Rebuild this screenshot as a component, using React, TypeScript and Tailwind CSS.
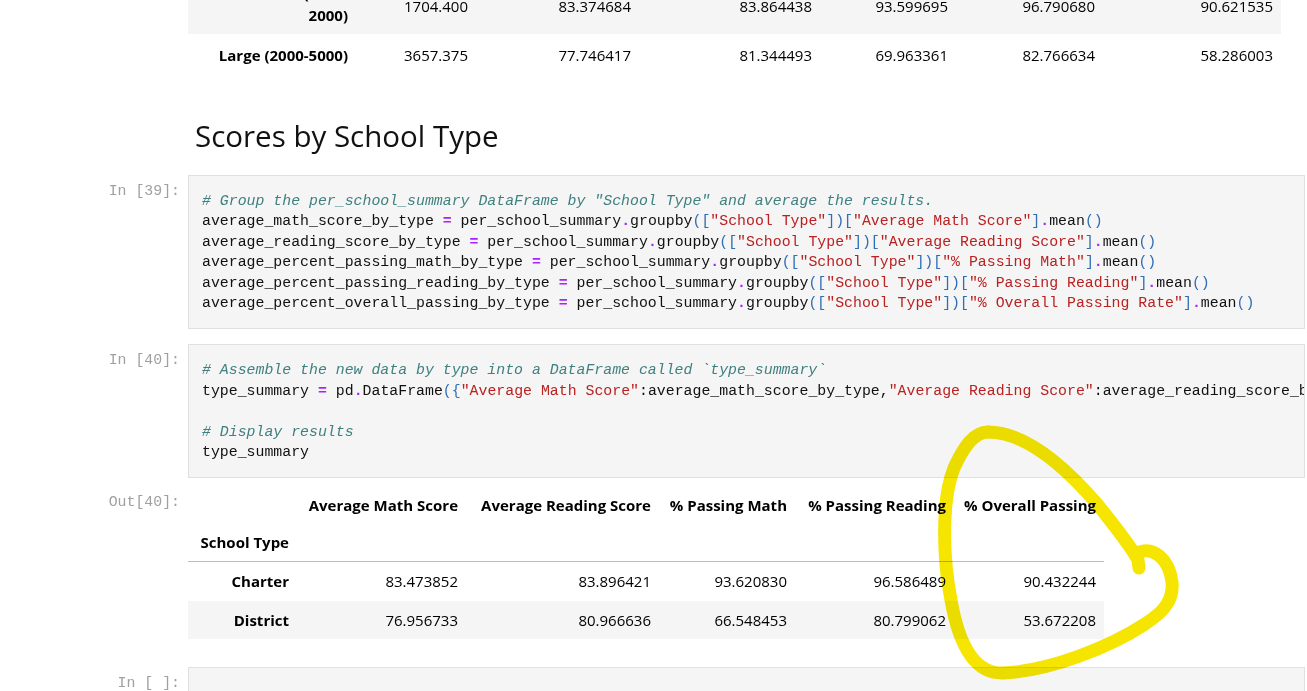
const MONO = "font-['Liberation_Mono',monospace] text-[14.87px] leading-[20.4px]"
const SANS = "font-['Open_Sans','Noto_Sans',sans-serif]"

const tokenRe = /(#.*$)|("[^"]*")|([=.])|([\[\](){}])|([^#"=.\[\](){}]+)/g

function CodeLine({ line }: { line: string }) {
  if (!line) return <div className="h-[20.4px]" />
  const parts: { text: string; cls: string }[] = []
  for (const m of line.matchAll(tokenRe)) {
    if (m[1]) parts.push({ text: m[1], cls: 'text-[#408080] italic' })
    else if (m[2]) parts.push({ text: m[2], cls: 'text-[#ba2121]' })
    else if (m[3]) parts.push({ text: m[3], cls: 'text-[#aa22ff] font-bold' })
    else if (m[4]) parts.push({ text: m[4], cls: 'text-[#2f6db5]' })
    else parts.push({ text: m[5], cls: 'text-[#111]' })
  }
  return (
    <div className="whitespace-pre">
      {parts.map((p, i) => (
        <span key={i} className={p.cls}>
          {p.text}
        </span>
      ))}
    </div>
  )
}

function InputCell({ prompt, lines, className = '' }: { prompt: string; lines: string[]; className?: string }) {
  return (
    <div className={`flex ${className}`}>
      <div className={`w-[188px] shrink-0 whitespace-pre pr-[8px] pt-[6px] text-right text-[#a0a0a0] ${MONO}`}>{prompt}</div>
      <div className={`w-[1117px] shrink-0 overflow-hidden border border-[#e0e0e0] bg-[#f5f5f5] px-[13px] py-[15px] ${MONO}`}>
        {lines.map((l, i) => (
          <CodeLine key={i} line={l} />
        ))}
      </div>
    </div>
  )
}

const cell39 = [
  '# Group the per_school_summary DataFrame by "School Type" and average the results.',
  'average_math_score_by_type = per_school_summary.groupby(["School Type"])["Average Math Score"].mean()',
  'average_reading_score_by_type = per_school_summary.groupby(["School Type"])["Average Reading Score"].mean()',
  'average_percent_passing_math_by_type = per_school_summary.groupby(["School Type"])["% Passing Math"].mean()',
  'average_percent_passing_reading_by_type = per_school_summary.groupby(["School Type"])["% Passing Reading"].mean()',
  'average_percent_overall_passing_by_type = per_school_summary.groupby(["School Type"])["% Overall Passing Rate"].mean()',
]

const cell40 = [
  '# Assemble the new data by type into a DataFrame called `type_summary`',
  'type_summary = pd.DataFrame({"Average Math Score":average_math_score_by_type,"Average Reading Score":average_reading_score_by_type})',
  '',
  '# Display results',
  'type_summary',
]

const outRows = [
  { name: 'Charter', vals: ['83.473852', '83.896421', '93.620830', '96.586489', '90.432244'], cls: 'h-[40px] bg-white' },
  { name: 'District', vals: ['76.956733', '80.966636', '66.548453', '80.799062', '53.672208'], cls: 'h-[38px] bg-[#f5f5f5]' },
]

export default function App() {
  return (
    <div className={`relative h-[691px] w-[1307px] overflow-hidden bg-white text-black ${SANS}`}>
      {/* tail of the size summary table */}
      <div className="pl-[188px]">
        <table className="-mt-[22px] w-[1093px] table-fixed text-[15px]">
          <colgroup>
            <col className="w-[168px]" />
            <col className="w-[120px]" />
            <col className="w-[163px]" />
            <col className="w-[181px]" />
            <col className="w-[136px]" />
            <col className="w-[147px]" />
            <col className="w-[178px]" />
          </colgroup>
          <tbody>
            <tr className="h-[56px] bg-[#f5f5f5]">
              <th className="px-[8px] pb-[4px] text-right align-middle font-bold leading-[22px]">
                (1000-
                <br />
                2000)
              </th>
              {['1704.400', '83.374684', '83.864438', '93.599695', '96.790680', '90.621535'].map((v) => (
                <td key={v} className="px-[8px] text-right align-middle">{v}</td>
              ))}
            </tr>
            <tr className="h-[42px]">
              <th className="px-[8px] text-right align-middle font-bold">Large (2000-5000)</th>
              {['3657.375', '77.746417', '81.344493', '69.963361', '82.766634', '58.286003'].map((v) => (
                <td key={v} className="px-[8px] text-right align-middle">{v}</td>
              ))}
            </tr>
          </tbody>
        </table>
      </div>

      <h2 className="mt-[43px] h-[34px] pl-[195px] text-[29.5px] font-medium leading-[34px] text-[#111]">Scores by School Type</h2>

      <InputCell prompt="In [39]:" lines={cell39} className="mt-[22px]" />
      <InputCell prompt="In [40]:" lines={cell40} className="mt-[15px]" />

      {/* output of cell 40 */}
      <div className="mt-[8px] flex">
        <div className={`w-[188px] shrink-0 pr-[8px] pt-[6px] text-right text-[#a0a0a0] ${MONO}`}>Out[40]:</div>
        <table className="w-[916px] table-fixed text-[15px]">
          <colgroup>
            <col className="w-[109px]" />
            <col className="w-[169px]" />
            <col className="w-[193px]" />
            <col className="w-[136px]" />
            <col className="w-[159px]" />
            <col className="w-[150px]" />
          </colgroup>
          <thead>
            <tr className="h-[38px]">
              <th className="px-[8px]" />
              {['Average Math Score', 'Average Reading Score', '% Passing Math', '% Passing Reading', '% Overall Passing'].map((h) => (
                <th key={h} className="whitespace-nowrap px-[8px] text-right align-middle font-bold">{h}</th>
              ))}
            </tr>
            <tr className="h-[37px] border-b border-[#bdbdbd]">
              <th className="whitespace-nowrap px-[8px] text-right align-middle font-bold">School Type</th>
              <th /><th /><th /><th /><th />
            </tr>
          </thead>
          <tbody>
            {outRows.map((r) => (
              <tr key={r.name} className={r.cls}>
                <th className="px-[8px] text-right align-middle font-bold">{r.name}</th>
                {r.vals.map((v) => (
                  <td key={v} className="px-[8px] text-right align-middle">{v}</td>
                ))}
              </tr>
            ))}
          </tbody>
        </table>
      </div>

      <div className="mt-[28px] flex">
        <div className={`w-[188px] shrink-0 whitespace-pre pr-[8px] pt-[6px] text-right text-[#a0a0a0] ${MONO}`}>In [ ]:</div>
        <div className="h-[60px] w-[1117px] shrink-0 border border-[#e0e0e0] bg-[#f5f5f5]" />
      </div>

      {/* hand-drawn highlighter loop */}
      <svg className="pointer-events-none absolute left-0 top-0 h-[691px] w-[1307px] mix-blend-multiply" viewBox="0 0 1307 691" fill="none">
        <path
          d="M988 432 C1028 432 1068 470 1098 505 C1116 528 1131 546 1138 560 L1139 568"
          stroke="#f5e500"
          strokeWidth="13"
          strokeLinecap="round"
          strokeLinejoin="round"
        />
        <path
          d="M1139 552 C1153 547 1169 558 1172 582 C1174 603 1160 614 1145 624 C1110 647 1050 671 1003 673 C973 674 958 640 951 600 C943 560 941 500 954 468 C964 446 974 432 988 432"
          stroke="#f5e500"
          strokeWidth="13"
          strokeLinecap="round"
          strokeLinejoin="round"
        />
      </svg>
    </div>
  )
}
